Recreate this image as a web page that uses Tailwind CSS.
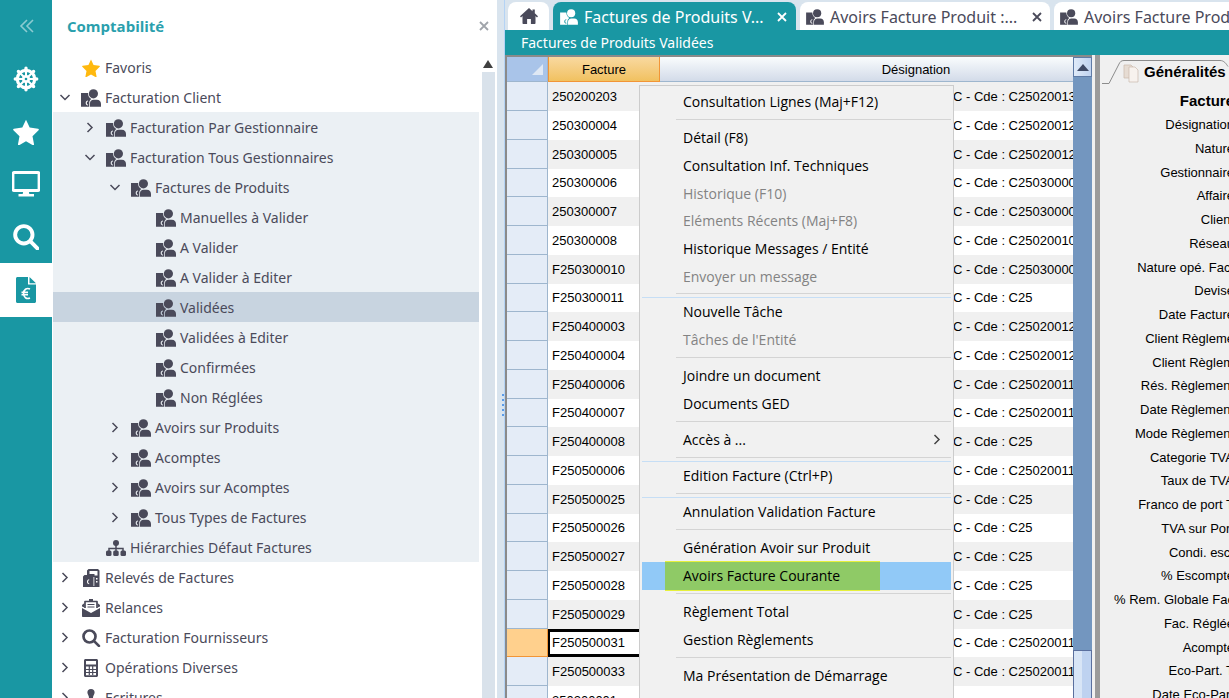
<!DOCTYPE html>
<html lang="fr">
<head>
    <meta charset="UTF-8">
    <meta name="viewport" content="width=device-width, initial-scale=1.0">
    <title>Comptabilité | Factures de Produits Validées</title>
    <script src="https://cdn.jsdelivr.net/npm/@tailwindcss/browser@4"></script>
</head>
<body class="flex h-screen overflow-hidden bg-[#d9e4ee] font-['Noto_Sans',sans-serif]">
    <!-- Icons -->
    <svg class="hidden">
        <symbol id="i-client" viewBox="0 0 20 18">
            <circle cx="12.400" cy="4.800" r="4.600"/>
            <path fill-rule="evenodd" d="M0 4h7c0 2.800 1.200 4.900 3.400 6-1.400.9-2.200 2.300-2.200 4V17.700H0zM7 11.400C5.600 11.400 4.700 12.500 4.700 14s.9 2.500 2.300 2.500v-1c-.8 0-1.200-.6-1.200-1.500s.4-1.600 1.200-1.600z"/>
            <path d="M8.900 17.700v-3.100c0-2.200 1.500-3.800 3.800-3.800h3.200c2.500 0 4.100 1.800 4.100 4.200v2.700z"/>
        </symbol>
        <symbol id="i-star" viewBox="0 0 24 24">
            <path d="M12 .8l3.400 7.100 7.700 1.100c.8.1 1 .9.500 1.400L18 15.900l1.400 7.500c.1.700-.6 1.100-1.100.8L12 20.600l-6.300 3.600c-.6.3-1.200-.1-1.100-.8L6 15.900.4 10.400C-.1 9.900.1 9.100.9 9l7.700-1.100z"/>
        </symbol>
        <symbol id="i-down" viewBox="0 0 12 12">
            <path d="M1.500 3L6 7.500 10.500 3" fill="none" stroke="currentColor" stroke-width="1.500"/>
        </symbol>
        <symbol id="i-right" viewBox="0 0 12 12">
            <path d="M3.500 1l4.500 4.500L3.500 10" fill="none" stroke="currentColor" stroke-width="1.500"/>
        </symbol>
        <symbol id="i-search" viewBox="0 0 24 24">
            <path d="M16.800 16.800L22.500 22.500" stroke="currentColor" stroke-width="3.600" stroke-linecap="round"/>
            <circle cx="10" cy="10" r="8" fill="none" stroke="currentColor" stroke-width="3.600"/>
        </symbol>
        <symbol id="i-sitemap" viewBox="0 0 20 16">
            <circle cx="10" cy="3" r="3"/>
            <path d="M10 4v7M3 12V8.500h14V12" fill="none" stroke="currentColor" stroke-width="1.500"/>
            <rect x="0" y="10.500" width="5.500" height="5.500" rx="1.500"/>
            <rect x="7.200" y="10.500" width="5.500" height="5.500" rx="1.500"/>
            <rect x="14.500" y="10.500" width="5.500" height="5.500" rx="1.500"/>
        </symbol>
        <symbol id="i-ledger" viewBox="0 0 18 18">
            <path fill-rule="evenodd" d="M6.500 0H16l1.500 1.500V18H1V7.500L2.500 6H5V1.500zM7.500 2v3h5v1.500h3V2zM7.200 10.200C5.800 10.200 5 11.300 5 12.800s.8 2.500 2.200 2.500v-1c-.7 0-1.100-.6-1.100-1.500s.4-1.600 1.100-1.600zM14 9v1.500h1.500V9zM14 12v1.500h1.500V12zM11.500 8v9h.8V8z"/>
        </symbol>
        <symbol id="i-mail" viewBox="0 0 18 18">
            <path d="M3 9V2.500h12V9" fill="none" stroke="currentColor" stroke-width="1.700" stroke-linejoin="round"/>
            <path d="M7 0h4v2H7zM0 9l9 5 9-5v8c0 .6-.4 1-1 1H1c-.6 0-1-.4-1-1zM0 7.500V6l2.500-2v4.500zM18 7.500V6l-2.500-2v4.500z"/>
            <path d="M5.500 5.500h7M5.500 8h7" stroke="currentColor" stroke-width="1"/>
        </symbol>
        <symbol id="i-calc" viewBox="0 0 14 18">
            <path fill-rule="evenodd" d="M1.500 0h11C13.300 0 14 .7 14 1.500v15c0 .8-.7 1.500-1.500 1.500h-11C.7 18 0 17.300 0 16.500v-15C0 .7.700 0 1.500 0zM2 2v3.500h10V2zM2 7.500v8.800h10V7.500z"/>
            <path d="M2 10.500h10M2 13.500h10M5.300 7v9M8.700 7v9" stroke="currentColor" stroke-width="1.200"/>
        </symbol>
        <symbol id="i-stamp" viewBox="0 0 18 18">
            <path d="M9 0a3.600 3.600 0 0 1 3.600 3.600c0 2-1.600 2.800-1.600 5.400h4c1.700 0 3 1.300 3 3v2H0v-2c0-1.700 1.300-3 3-3h4C7 6.400 5.400 5.600 5.400 3.600A3.600 3.600 0 0 1 9 0zM1.500 15.500h15V18h-15z"/>
        </symbol>
        <symbol id="i-close" viewBox="0 0 10 10">
            <path d="M1 1l8 8M9 1L1 9" fill="none" stroke="currentColor" stroke-width="1.800"/>
        </symbol>
    </svg>

    <!-- Module bar -->
    <nav class="flex w-[52px] shrink-0 flex-col items-center bg-[#1997a3] text-white" aria-label="Modules">
        <button class="flex h-[52px] w-full items-center justify-center pl-0.5 text-white/50" aria-label="Réduire">
            <svg class="size-4" viewBox="0 0 16 16" fill="none" stroke="currentColor" stroke-width="1.600"><path d="M8 2L2 8l6 6M14 2L8 8l6 6"/></svg>
        </button>
        <button class="flex h-[53px] w-full items-center justify-center" aria-label="Navigation">
            <svg class="size-[26px]" viewBox="0 0 26 26" fill="none" stroke="currentColor">
                <circle cx="13" cy="13" r="8.700" stroke-width="3.200"/>
                <circle cx="13" cy="13" r="3" stroke-width="2"/>
                <path stroke-width="2" d="M13 3v20M3 13h20M6 6l14 14M20 6L6 20"/>
                <path stroke-width="3.400" stroke-linecap="round" d="M13 2.300v.1M13 23.600v.1M2.300 13h.1M23.600 13h.1M5.400 5.400h.1M20.500 5.400h.1M5.400 20.500h.1M20.500 20.500h.1"/>
                <circle cx="13" cy="13" r="1.300" fill="#1997a3" stroke="none"/>
            </svg>
        </button>
        <button class="flex h-[53px] w-full items-center justify-center" aria-label="Favoris">
            <svg class="size-[26px] fill-current"><use href="#i-star"/></svg>
        </button>
        <button class="flex h-[52px] w-full items-center justify-center" aria-label="Bureau">
            <svg class="h-[26px] w-7" viewBox="0 0 28 26"><rect x="1" y="1.500" width="26" height="18" rx="1" fill="none" stroke="currentColor" stroke-width="2.800"/><path fill="currentColor" d="M11.500 19h5l.8 4H22v2.500H6.500V23h4.200z"/></svg>
        </button>
        <button class="flex h-[53px] w-full items-center justify-center" aria-label="Rechercher">
            <svg class="size-[26px]"><use href="#i-search"/></svg>
        </button>
        <button class="flex h-[54px] w-full items-center justify-center bg-white text-[#1997a3]" aria-label="Comptabilité">
            <svg class="h-[26px] w-5" viewBox="0 0 20 26">
                <path fill="currentColor" d="M1.500 0H12v7.500h8v17c0 .8-.7 1.500-1.500 1.500h-17C.7 26 0 25.300 0 24.500v-23C0 .7.700 0 1.500 0zM13.500 0L20 6.200h-6.500z"/>
                <path fill="none" stroke="#fff" stroke-width="1.600" d="M14 12c-3.500-1.600-6.400.8-6.400 4.500s2.900 6.100 6.400 4.500M5.500 15.400h6.500M5.500 17.700h6.500"/>
            </svg>
        </button>
    </nav>

    <!-- Navigation tree -->
    <aside class="flex w-[445px] shrink-0 flex-col bg-white text-[#4a4a5a]">
        <header class="flex h-[52px] shrink-0 items-center justify-between pr-2 pl-[15px]">
            <h1 class="font-['Open_Sans',sans-serif] text-[15px] font-bold text-[#2a9fad]">Comptabilité</h1>
            <button class="text-[#a0a4aa]" aria-label="Fermer"><svg class="size-[10px]"><use href="#i-close"/></svg></button>
        </header>
        <div class="flex min-h-0 flex-1">
            <ul id="tree" class="min-w-0 flex-1 overflow-hidden text-sm"></ul>
            <div class="flex w-[18px] shrink-0 flex-col items-center pt-2">
                <div class="mb-1 border-x-[5px] border-b-8 border-x-transparent border-b-[#404040]"></div>
                <div class="w-[13px] flex-1 bg-[#d9e2eb]"></div>
            </div>
        </div>
    </aside>

    <div class="flex w-2 shrink-0 flex-col items-center justify-center gap-[3px] border-r border-[#b4d3f5] pt-28 pl-1" role="separator">
        <i class="size-0.5 bg-[#5b9be8]"></i><i class="size-0.5 bg-[#5b9be8]"></i><i class="size-0.5 bg-[#5b9be8]"></i><i class="size-0.5 bg-[#5b9be8]"></i><i class="size-0.5 bg-[#5b9be8]"></i>
    </div>

    <main class="flex min-w-0 flex-1 flex-col">
        <!-- Tabs -->
        <div class="flex h-[30px] shrink-0 gap-1 overflow-hidden pt-0.5 pl-[3px] text-base text-[#4a4a5a]" role="tablist">
            <button class="flex w-[41px] shrink-0 items-center justify-center rounded-t-lg bg-white" role="tab" aria-label="Accueil">
                <svg class="h-4 w-[18px] fill-current" viewBox="0 0 18 16"><path d="M9 0l3.500 3.200V1.500h2.300v3.800L18 8.300l-1 1.200-1.500-1.400V15c0 .6-.4 1-1 1h-3.600v-5H7.100v5H3.500c-.6 0-1-.4-1-1V8.100L1 9.500 0 8.300z"/></svg>
            </button>
            <button class="flex w-[243px] shrink-0 items-center rounded-t-lg bg-[#1997a3] px-[7px] pt-0.5 text-white" role="tab" aria-selected="true">
                <svg class="mr-1.5 h-4 w-[18px] fill-current"><use href="#i-client"/></svg>Factures de Produits V...<svg class="mr-0.5 ml-auto size-[10px]"><use href="#i-close"/></svg>
            </button>
            <button class="flex w-[250px] shrink-0 items-center rounded-t-lg bg-white px-1.5 pt-0.5" role="tab">
                <svg class="mr-1.5 h-4 w-[18px] fill-current"><use href="#i-client"/></svg>Avoirs Facture Produit :...<svg class="mr-0.5 ml-auto size-[10px]"><use href="#i-close"/></svg>
            </button>
            <button class="flex w-[250px] shrink-0 items-center rounded-t-lg bg-white px-1.5 pt-0.5" role="tab">
                <svg class="mr-1.5 h-4 w-[18px] fill-current"><use href="#i-client"/></svg>Avoirs Facture Produit :...<svg class="mr-0.5 ml-auto size-[10px]"><use href="#i-close"/></svg>
            </button>
        </div>
        <h2 class="flex h-[25px] shrink-0 items-center bg-[#1997a3] pl-4 text-sm text-white">Factures de Produits Validées</h2>

        <div class="flex min-h-0 flex-1 bg-[#f0f0f0] font-['Liberation_Sans',sans-serif] text-[13px] text-black">
            <!-- Invoice grid -->
            <section class="relative flex min-w-0 flex-1 border-t-2 border-l-2 border-[#8a8a8a]">
                <div class="min-w-0 flex-1 overflow-hidden bg-white">
                    <table class="w-[665px] table-fixed border-separate border-spacing-0">
                        <thead>
                            <tr class="h-[25px]">
                                <th class="w-[41px] border-r border-b border-[#9eb6ce] bg-[#a9c4e9]" aria-label="Tout sélectionner">
                                    <svg class="mr-1 ml-auto size-[11px] fill-[#dfe8f4]" viewBox="0 0 11 11"><path d="M11 0v11H0z"/></svg>
                                </th>
                                <th class="w-28 border-x border-b border-[#f29536] bg-linear-to-b from-[#f9d99f] to-[#f1c15f] pt-0.5 font-normal">Facture</th>
                                <th class="border-b border-[#9eb6ce] bg-linear-to-b from-[#f9fcfd] to-[#d3dbe9] pt-0.5 font-normal">Désignation</th>
                            </tr>
                        </thead>
                        <tbody id="factures"></tbody>
                    </table>
                </div>
                <div class="flex w-[19px] shrink-0 flex-col justify-between bg-[#7396bf]">
                    <button class="flex h-5 items-center justify-center border border-[#5f7ba6] bg-linear-to-r from-[#dfeaf8] to-[#c0d3f0]" aria-label="Monter">
                        <span class="border-x-[6px] border-b-[7px] border-x-transparent border-b-[#3f4a66]"></span>
                    </button>
                    <div class="h-12 border border-b-0 border-[#5a6f9e] bg-linear-to-r from-[#d8e5f6] from-50% to-[#bed2f0] to-50%"></div>
                </div>

                <!-- Context menu -->
                <div id="menu" role="menu" class="absolute top-7 left-[132px] z-10 w-[315px] border border-[#ccc] bg-[#f1f1f1] py-0.5 font-['Open_Sans',sans-serif] text-sm"></div>
            </section>

            <div class="ml-[3px] w-[5px] shrink-0 bg-[#9b9b9b]"></div>

            <!-- Detail panel -->
            <section class="w-[129px] shrink-0 overflow-hidden pl-0.5">
                <div class="flex h-[30px] items-end">
                    <svg class="h-[27px] w-[180px] shrink-0" viewBox="0 0 180 27" fill="none">
                        <path d="M0 25.500h7L17 6c1-2 2-3.500 5-3.500h96c4 0 6 3 8 6" stroke="#8c8c8c"/>
                        <path d="M22 7h7l2 2v11h-9z" fill="#e6dcd3" stroke="#c9b9ac" stroke-width=".7"/>
                        <path d="M27 9h6l3 3v12h-9z" fill="#f7f2ee" stroke="#c9b9ac" stroke-width=".7"/>
                    </svg>
                    <h3 class="-ml-[138px] pb-0.5 text-[15px] font-bold">Généralités</h3>
                </div>
                <div id="fields" class="w-[132px] pt-1"></div>
            </section>
        </div>
    </main>

    <script>
        // [level, state, icon, label]
        const tree = [
            [0, '', 'star', 'Favoris'],
            [0, 'down', 'client', 'Facturation Client'],
            [1, 'right', 'client', 'Facturation Par Gestionnaire'],
            [1, 'down', 'client', 'Facturation Tous Gestionnaires'],
            [2, 'down', 'client', 'Factures de Produits'],
            [3, '', 'client', 'Manuelles à Valider'],
            [3, '', 'client', 'A Valider'],
            [3, '', 'client', 'A Valider à Editer'],
            [3, '', 'client', 'Validées'],
            [3, '', 'client', 'Validées à Editer'],
            [3, '', 'client', 'Confirmées'],
            [3, '', 'client', 'Non Réglées'],
            [2, 'right', 'client', 'Avoirs sur Produits'],
            [2, 'right', 'client', 'Acomptes'],
            [2, 'right', 'client', 'Avoirs sur Acomptes'],
            [2, 'right', 'client', 'Tous Types de Factures'],
            [1, '', 'sitemap', 'Hiérarchies Défaut Factures'],
            [0, 'right', 'ledger', 'Relevés de Factures'],
            [0, 'right', 'mail', 'Relances'],
            [0, 'right', 'search', 'Facturation Fournisseurs'],
            [0, 'right', 'calc', 'Opérations Diverses'],
            [0, 'right', 'stamp', 'Ecritures']
        ];
        const indent = ['pl-[6px]', 'pl-[31px]', 'pl-[56px]', 'pl-[81px]'];

        document.getElementById('tree').innerHTML = tree.map(([level, state, icon, label]) => {
            const bg = label === 'Validées' ? 'bg-[#c8d4e0]' : level > 0 ? 'bg-[#ebf0f4]' : '';
            const color = icon === 'star' ? 'fill-[#ffb90f]' : 'fill-current';
            return `
                <li class="ml-px flex h-[30px] items-center pt-0.5 ${indent[level]} ${bg}">
                    <svg class="size-3 shrink-0">${state ? `<use href="#i-${state}"/>` : ''}</svg>
                    <svg class="mr-1 ml-[10px] h-[18px] w-5 shrink-0 ${color}"><use href="#i-${icon}"/></svg>
                    <a href="#" class="whitespace-nowrap">${label}</a>
                </li>`;
        }).join('');

        const factures = [
            ['250200203', 'C25020013'], ['250300004', 'C25020012'], ['250300005', 'C25020012'],
            ['250300006', 'C25030000'], ['250300007', 'C25030000'], ['250300008', 'C25020010'],
            ['F250300010', 'C25030000'], ['F250300011', 'C25'], ['F250400003', 'C25020012'],
            ['F250400004', 'C25020012'], ['F250400006', 'C25020011'], ['F250400007', 'C25020011'],
            ['F250400008', 'C25'], ['F250500006', 'C25020011'], ['F250500025', 'C25'],
            ['F250500026', 'C25'], ['F250500027', 'C25'], ['F250500028', 'C25'],
            ['F250500029', 'C25'], ['F250500031', 'C25020011'], ['F250500033', 'C25020011'],
            ['250200001', '']
        ];

        document.getElementById('factures').innerHTML = factures.map(([num, cde]) => {
            const current = num === 'F250500031';
            const head = current ? 'border-[#f29536] bg-[#ffd08d]' : 'border-[#9eb6ce] bg-[#e4ecf7]';
            const cell = current ? 'border-y-[3px] border-l-2 border-black pl-0.5' : 'pl-1';
            return `
                <tr class="h-[29px] odd:bg-[#f0f0f0] nth-[4n]:h-7">
                    <th class="border-r border-b ${head}"></th>
                    <td class="${cell}">${num}</td>
                    <td class="pl-[293px] whitespace-nowrap">${cde ? `C - Cde : ${cde}` : ''}</td>
                </tr>`;
        }).join('');

        // One array per block, a rule between blocks; "-" marks a disabled entry
        const menu = [
            ['Consultation Lignes (Maj+F12)'],
            ['Détail (F8)', 'Consultation Inf. Techniques', '-Historique (F10)', '-Eléments Récents (Maj+F8)', 'Historique Messages / Entité', '-Envoyer un message'],
            ['Nouvelle Tâche', "-Tâches de l'Entité"],
            ['Joindre un document', 'Documents GED'],
            ['Accès à ...'],
            ['Edition Facture (Ctrl+P)'],
            ['Annulation Validation Facture'],
            ['Génération Avoir sur Produit', 'Avoirs Facture Courante'],
            ['Règlement Total', 'Gestion Règlements'],
            ['Ma Présentation de Démarrage', '-Annuler la Présentation']
        ];
        // Blocks followed by a second, blue rule
        const doubled = [1, 4, 5];

        document.getElementById('menu').innerHTML = menu.map((block, i) => '<div>' + block.map(entry => {
            const off = entry.startsWith('-');
            const label = off ? entry.slice(1) : entry;
            const active = label === 'Avoirs Facture Courante';
            return `
                <button role="menuitem" ${off ? 'disabled' : ''} class="mx-0.5 flex h-7 w-[309px] items-center nth-[3n]:h-[27px] ${active ? 'bg-[#91c9f7] pl-[23px]' : 'pl-[41px]'} ${off ? 'text-[#838383]' : ''}">
                    <span class="${active ? 'bg-[#8fca66] border-y border-[#e6f03c] h-[30px] leading-7 pl-[18px] pr-10' : ''}">${label}</span>
                    ${label === 'Accès à ...' ? '<svg class="mr-2 ml-auto size-3 text-[#444]"><use href="#i-right"/></svg>' : ''}
                </button>`;
        }).join('') + '</div>' + (i < menu.length - 1 ? `
            <div class="mx-0.5 h-2 pt-[3px]">
                <hr class="ml-[34px] border-[#d4d4d4]">
                ${doubled.includes(i) ? '<hr class="mt-[3px] border-[#c6def5]">' : ''}
            </div>` : '')).join('');

        const fields = [
            'Facture', 'Désignation', 'Nature', 'Gestionnaire', 'Affaire', 'Client', 'Réseau',
            'Nature opé. Fact', 'Devise', 'Date Facture', 'Client Règleme', 'Client Règlem',
            'Rés. Règlement', 'Date Règlement', 'Mode Règlement', 'Categorie TVA', 'Taux de TVA',
            'Franco de port T', 'TVA sur Port', 'Condi. esc.', '% Escompte', '% Rem. Globale Fac',
            'Fac. Réglée', 'Acompte', 'Eco-Part. T', 'Date Eco-Part'
        ];
        document.getElementById('fields').innerHTML = fields.map(label =>
            `<div class="flex h-6 items-center justify-end whitespace-nowrap nth-[4n]:h-[23px] first:text-[15px] first:font-bold">${label}</div>`
        ).join('');
    </script>
</body>
</html>
